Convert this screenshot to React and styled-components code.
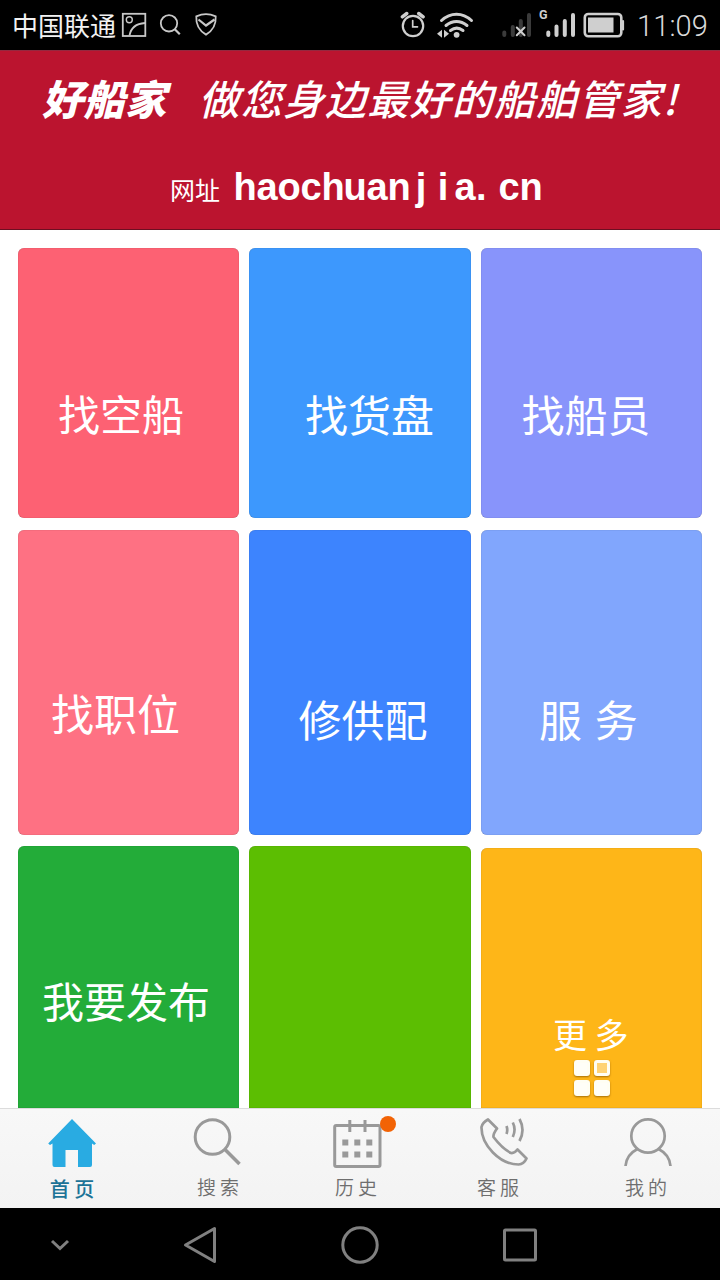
import styled, { createGlobalStyle } from 'styled-components';

const GlobalStyle = createGlobalStyle`
  body {
    margin: 0;
    background-color: #fff;
    font-family: "Noto Sans CJK SC", sans-serif;
  }
`;

const Screen = styled.div`
  display: flex;
  flex-direction: column;
  width: 720px;
  height: 1280px;
  overflow: hidden;
  background-color: #fff;
`;

const StatusBar = styled.div`
  display: flex;
  align-items: center;
  justify-content: space-between;
  box-sizing: border-box;
  height: 50px;
  padding: 0 12px;
  background-color: #000;
  flex-shrink: 0;
`;

const StatusGroup = styled.div`
  display: flex;
  align-items: center;
  height: 50px;
`;

const Carrier = styled.span`
  width: 109px;
  color: #f2f2f2;
  font-size: 26px;
  line-height: 50px;
  font-weight: 400;
  white-space: nowrap;
`;

const Clock = styled.span`
  margin-left: 11px;
  padding-top: 3px;
  color: #dadada;
  font-family: Roboto, sans-serif;
  font-size: 29px;
  font-weight: 300;
  line-height: 47px;
  letter-spacing: 0.1px;
  white-space: nowrap;
`;

const Banner = styled.header`
  box-sizing: border-box;
  height: 180px;
  border-top: 1px solid #94283f;
  border-bottom: 1px solid #6d0f22;
  background-color: #bb142f;
  color: #fff;
  flex-shrink: 0;
`;

const Slogan = styled.h1`
  display: flex;
  gap: 32px;
  margin: 0;
  padding: 24px 0 0 42px;
  font-size: 41px;
  line-height: 44px;
  font-style: italic;
  white-space: nowrap;
`;

const Brand = styled.span`
  letter-spacing: 0.5px;
  font-weight: 900;
`;

const Tagline = styled.span`
  letter-spacing: 1.2px;
  font-weight: 500;
`;

const Site = styled.div`
  display: flex;
  align-items: baseline;
  padding: 45px 0 0 170px;
  line-height: 46px;
`;

const SiteLabel = styled.span`
  width: 64px;
  font-size: 25px;
`;

const SiteUrl = styled.span`
  display: flex;
  font-family: "Liberation Sans", sans-serif;
  font-size: 38px;
  font-weight: 700;
`;

const UrlLetter = styled.span`
  display: flex;
  justify-content: ${props => (props.$left ? 'flex-start' : 'center')};
  width: 22px;
`;

const Tiles = styled.main`
  display: grid;
  grid-template-columns: 221px 222px 221px;
  grid-template-rows: 270px 305px 262px;
  column-gap: 10px;
  row-gap: 11.5px;
  box-sizing: border-box;
  height: 878px;
  padding: 18px;
  overflow: hidden;
  flex-shrink: 0;
`;

const Tile = styled.section`
  box-sizing: border-box;
  margin-top: ${props => props.$drop || 0}px;
  padding: ${props => props.$top}px 0 0 ${props => props.$left}px;
  border-radius: ${props => (props.$cut ? '6px 6px 0 0' : '6px')};
  background-color: ${props => props.$color};
  box-shadow: inset 0 0 1px rgba(0, 0, 0, 0.4);
  color: #fff;
`;

const TileLabel = styled.div`
  font-size: ${props => props.$size}px;
  line-height: ${props => props.$size}px;
  font-weight: 400;
  word-spacing: ${props => props.$word || 0}px;
  white-space: nowrap;
`;

const MoreGrid = styled.div`
  display: grid;
  grid-template-columns: 16px 16px;
  grid-auto-rows: 16px;
  gap: 4px;
  margin: 9px 0 0 21px;
`;

const MoreCell = styled.span`
  box-sizing: border-box;
  border: 3px solid #fffef4;
  border-radius: 3px;
  background-color: ${props => (props.$hollow ? '#ffd375' : '#fffef8')};
  box-shadow: 0 1px 2px rgba(130, 80, 0, 0.7);
`;

const TabBar = styled.nav`
  display: grid;
  grid-template-columns: 144px 148px 128px 156px 140px;
  box-sizing: border-box;
  height: 100px;
  border-top: 1px solid #dcdcdc;
  background: linear-gradient(#f8f8f8, #f3f3f3);
  flex-shrink: 0;
`;

const Tab = styled.a`
  display: flex;
  flex-direction: column;
  align-items: center;
  padding-top: 7px;
  color: ${props => (props.$active ? '#1c7397' : '#6e6e6e')};
`;

const TabIcon = styled.div`
  position: relative;
  width: 52px;
  height: 54px;
  margin-left: ${props => props.$shift || 0}px;
`;

const TabLabel = styled.span`
  margin-top: ${props => (props.$active ? 8 : 6)}px;
  font-size: ${props => (props.$active ? 20 : 19)}px;
  line-height: 22px;
  font-weight: ${props => (props.$active ? 500 : 350)};
  white-space: nowrap;
`;

const Dot = styled.span`
  position: absolute;
  top: 0;
  right: -13px;
  width: 16px;
  height: 16px;
  border-radius: 50%;
  background-color: #f26305;
`;

const NavBar = styled.footer`
  display: flex;
  align-items: center;
  height: 72px;
  padding: 1px 0 0 40px;
  box-sizing: border-box;
  background-color: #000;
  flex-shrink: 0;
`;

const NavButton = styled.span`
  display: flex;
  justify-content: center;
  width: ${props => props.$width || 160}px;
`;

const NotificationIcons = () => (
  <svg width="100" height="50" viewBox="121 0 100 50" fill="none" stroke="#c8c8c8" strokeWidth="1.8">
    <rect x="122.8" y="13.8" width="22.5" height="22.2" />
    <circle cx="129.3" cy="19.8" r="3" strokeWidth="1.4" />
    <path d="M129.5 35.5Q131.5 24 145 23" />
    <circle cx="169" cy="23.3" r="8.2" />
    <path d="M174.8 29.3l5 5" strokeWidth="2.2" />
    <path d="M206 14.2c3.5 0 6.5 .8 9.7 2.2 .5 8.2-3 14.3-9.7 18.2-6.7-3.9-10.2-10-9.7-18.2 3.2-1.4 6.2-2.2 9.7-2.2z" />
    <path d="M198.5 19.5l7.500 6 8.500-6" strokeWidth="2.2" />
  </svg>
);

const SignalIcons = () => (
  <svg width="230" height="50" viewBox="396 0 230 50" fill="none" stroke="#cfcfcf" strokeLinecap="round">
    <circle cx="413" cy="26" r="10.2" strokeWidth="2.2" />
    <path d="M412.700 20.500v6.300h4.800" strokeWidth="1.7" />
    <path d="M402.300 16.800l4.500-3.300M423.200 16.800l-4.500-3.300" strokeWidth="3.5" />
    <path d="M441.500 20.500c9-8.500 21-8.500 30 0" strokeWidth="3" />
    <path d="M446 25.500c6.500-5.500 14.500-5.500 21 0" strokeWidth="3" />
    <path d="M450.500 30.500c4-3 8.500-3 12.500 0" strokeWidth="3" />
    <circle cx="456.6" cy="34.8" r="2.9" fill="#cfcfcf" stroke="none" />
    <path d="M437 33.700l5-4v8zM449 33.700l-5-4v8z" fill="#cfcfcf" stroke="none" />
    <g stroke="#3b3b3b" strokeWidth="4">
      <path d="M504.300 32.500v2.500M512.800 27v8M520.800 21v14M529 15v20" />
    </g>
    <path d="M516.800 27.500l7.700 7.700M524.500 27.500l-7.700 7.700" strokeWidth="2" />
    <g strokeWidth="4">
      <path d="M548.300 32.500v2.500M556.500 26.500v8.500M564.800 21v14M573 15v20" />
    </g>
    <text x="539" y="18.5" fill="#cfcfcf" stroke="none" fontFamily="Roboto, sans-serif" fontSize="12.5" fontWeight="700">G</text>
    <rect x="584.8" y="14" width="36.5" height="22.3" rx="3.5" strokeWidth="2.6" />
    <rect x="588" y="17.5" width="25.5" height="15" fill="#cfcfcf" stroke="none" />
    <path d="M623 21v8.500" strokeWidth="2.2" />
  </svg>
);

const HomeIcon = () => (
  <svg width="52" height="54" viewBox="46 1115 52 54">
    <path d="M72 1118l24 24.500-1.800 1.500-2.200-1.500v21.500q0 2-2 2h-12v-17h-12.500v17h-11q-2 0-2-2v-21.500l-2.500 1.500-1.800-1.500z" fill="#29abe2" />
  </svg>
);

const SearchIcon = () => (
  <svg width="52" height="54" viewBox="192 1116 52 54" fill="none" stroke="#999" strokeWidth="3">
    <circle cx="212.5" cy="1137" r="17.3" />
    <path d="M225 1149.500l14.500 14.500" strokeWidth="3.5" />
  </svg>
);

const CalendarIcon = () => (
  <svg width="52" height="54" viewBox="331 1116 52 54" fill="none" stroke="#999" strokeWidth="3">
    <rect x="334.7" y="1125.5" width="45.3" height="41" rx="1.5" />
    <path d="M349.800 1120v12M365 1120v12" />
    <path d="M342.300 1142.500h6M354.300 1142.500h6M366.300 1142.500h6M342.300 1154.500h6M354.300 1154.500h6M366.300 1154.500h6" strokeWidth="6" />
  </svg>
);

const PhoneIcon = () => (
  <svg width="52" height="54" viewBox="478 1116 52 54" fill="none" stroke="#999" strokeWidth="2.7" strokeLinejoin="round">
    <path d="M488 1119.500Q482.500 1122.500 481.500 1127C481 1145 500 1164.500 518.500 1164.500Q524 1164 526.500 1158.500L517.500 1149.500Q514.500 1153.500 511 1153C504 1149.500 498 1143 493.500 1137Q493 1134 497 1128.500Z" />
    <path d="M506.500 1126q1.500 4 0 8M512.800 1122.500q3.500 7 0 14.500M519.500 1119q6 11 0 22" />
  </svg>
);

const UserIcon = () => (
  <svg width="52" height="54" viewBox="622 1116 52 54" fill="none" stroke="#999" strokeWidth="2.7">
    <circle cx="648" cy="1136" r="16.7" />
    <path d="M637.500 1149q-11 5.500-12 17M658.500 1149q11 5.500 12 17" />
  </svg>
);

const tiles = [
  { label: '找空船', color: '#fd6173', left: 40, top: 144, size: 42 },
  { label: '找货盘', color: '#3d98fd', left: 56, top: 144, size: 43 },
  { label: '找船员', color: '#8894fb', left: 40.5, top: 144, size: 43 },
  { label: '找职位', color: '#fe7183', left: 33, top: 161, size: 43 },
  { label: '修供配', color: '#3d84fe', left: 49.5, top: 167, size: 43 },
  { label: '服 务', color: '#81a6fd', left: 58, top: 167, size: 43, word: 3 },
  { label: '我要发布', color: '#23ac39', left: 24, top: 133, size: 42, cut: true },
  { color: '#5cbe02', cut: true },
  { label: '更 多', color: '#feb618', left: 72, top: 169, size: 34, cut: true, drop: 2, more: true },
];

const tabs = [
  { label: '首 页', Icon: HomeIcon, active: true },
  { label: '搜 索', Icon: SearchIcon },
  { label: '历 史', Icon: CalendarIcon, badge: true, shift: 2 },
  { label: '客 服', Icon: PhoneIcon, shift: 12 },
  { label: '我 的', Icon: UserIcon, shift: 4 },
];

const App = () => {
  return (
    <Screen>
      <GlobalStyle />
      <StatusBar>
        <StatusGroup>
          <Carrier>中国联通</Carrier>
          <NotificationIcons />
        </StatusGroup>
        <StatusGroup>
          <SignalIcons />
          <Clock>11:09</Clock>
        </StatusGroup>
      </StatusBar>

      <Banner>
        <Slogan>
          <Brand>好船家</Brand>
          <Tagline>做您身边最好的船舶管家!</Tagline>
        </Slogan>
        <Site>
          <SiteLabel>网址</SiteLabel>
          <SiteUrl>
            {'haochuanjia.cn'.split('').map((letter, index) => (
              <UrlLetter key={index} $left={letter === '.'}>{letter}</UrlLetter>
            ))}
          </SiteUrl>
        </Site>
      </Banner>

      <Tiles>
        {tiles.map(tile => (
          <Tile
            key={tile.color}
            $color={tile.color}
            $left={tile.left || 0}
            $top={tile.top || 0}
            $cut={tile.cut}
            $drop={tile.drop}
          >
            {tile.label && <TileLabel $size={tile.size} $word={tile.word}>{tile.label}</TileLabel>}
            {tile.more && (
              <MoreGrid>
                <MoreCell />
                <MoreCell $hollow />
                <MoreCell />
                <MoreCell />
              </MoreGrid>
            )}
          </Tile>
        ))}
      </Tiles>

      <TabBar>
        {tabs.map(({ label, Icon, active, badge, shift }) => (
          <Tab key={label} $active={active}>
            <TabIcon $shift={shift}>
              <Icon />
              {badge && <Dot />}
            </TabIcon>
            <TabLabel $active={active}>{label}</TabLabel>
          </Tab>
        ))}
      </TabBar>

      <NavBar>
        <NavButton $width={40}>
          <svg width="20" height="14" viewBox="0 0 20 14" fill="none" stroke="#808080" strokeWidth="3">
            <path d="M2 3l8 7.500 8-7.500" />
          </svg>
        </NavButton>
        <NavButton $width={240}>
          <svg width="36" height="40" viewBox="0 0 36 40" fill="none" stroke="#808080" strokeWidth="3" strokeLinejoin="round">
            <path d="M32.500 3.500v33L3.500 20z" />
          </svg>
        </NavButton>
        <NavButton $width={80}>
          <svg width="40" height="40" viewBox="0 0 40 40" fill="none" stroke="#808080" strokeWidth="3">
            <circle cx="20" cy="20" r="17.2" />
          </svg>
        </NavButton>
        <NavButton $width={240}>
          <svg width="40" height="40" viewBox="0 0 40 40" fill="none" stroke="#808080" strokeWidth="3">
            <rect x="4.5" y="5" width="31" height="30" rx="1" />
          </svg>
        </NavButton>
      </NavBar>
    </Screen>
  );
};

export default App;
